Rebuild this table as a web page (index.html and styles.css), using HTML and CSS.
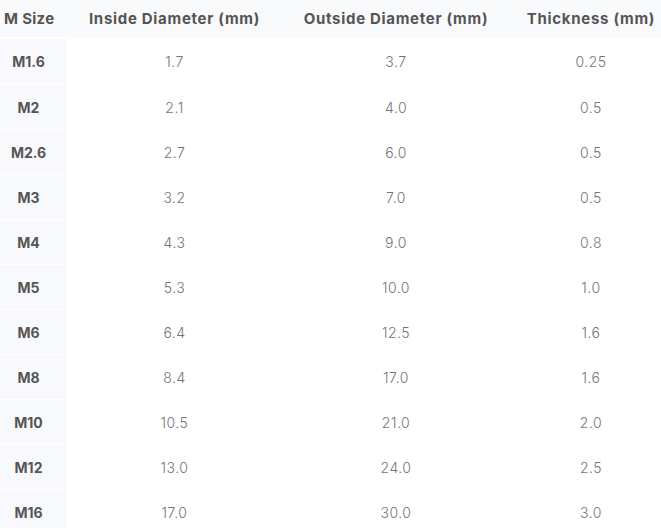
FILE: index.html
```html
<!DOCTYPE html>
<html>
<head>
<meta charset="utf-8">
<link rel="stylesheet" href="styles.css">
</head>
<body>
<table class="sizes">
  <colgroup>
    <col class="c1"><col class="c2"><col class="c3"><col class="c4">
  </colgroup>
  <thead>
    <tr><th class="first">M Size</th><th>Inside Diameter (mm)</th><th>Outside Diameter (mm)</th><th>Thickness (mm)</th></tr>
  </thead>
  <tbody>
    <tr><th class="first">M1.6</th><td>1.7</td><td>3.7</td><td>0.25</td></tr>
    <tr><th class="first">M2</th><td>2.1</td><td>4.0</td><td>0.5</td></tr>
    <tr><th class="first">M2.6</th><td>2.7</td><td>6.0</td><td>0.5</td></tr>
    <tr><th class="first">M3</th><td>3.2</td><td>7.0</td><td>0.5</td></tr>
    <tr><th class="first">M4</th><td>4.3</td><td>9.0</td><td>0.8</td></tr>
    <tr><th class="first">M5</th><td>5.3</td><td>10.0</td><td>1.0</td></tr>
    <tr><th class="first">M6</th><td>6.4</td><td>12.5</td><td>1.6</td></tr>
    <tr><th class="first">M8</th><td>8.4</td><td>17.0</td><td>1.6</td></tr>
    <tr><th class="first">M10</th><td>10.5</td><td>21.0</td><td>2.0</td></tr>
    <tr><th class="first">M12</th><td>13.0</td><td>24.0</td><td>2.5</td></tr>
    <tr><th class="first">M16</th><td>17.0</td><td>30.0</td><td>3.0</td></tr>
  </tbody>
</table>
</body>
</html>
```

FILE: styles.css
```css
html, body {
  margin: 0;
  padding: 0;
  background: #ffffff;
  overflow: hidden;
}
body {
  font-family: "Inter", "Liberation Sans", sans-serif;
}
.sizes {
  border-collapse: separate;
  border-spacing: 0;
  width: 672px;
  table-layout: fixed;
}
.c1 { width: 67px; }
.c2 { width: 215px; }
.c3 { width: 228px; }
.c4 { width: 162px; }
.sizes thead th {
  height: 37px;
  padding: 0;
  background: #f9fafb;
  border-bottom: 2px solid #ffffff;
  color: #555555;
  font-size: 15px;
  font-weight: 700;
  letter-spacing: 0.7px;
  text-align: center;
  vertical-align: middle;
}
.sizes thead th.first {
  text-align: left;
  padding-left: 4px;
  letter-spacing: 0.3px;
}
.sizes tbody th,
.sizes tbody td {
  height: 44px;
  padding: 0;
  border-top: 1px solid #ffffff;
  text-align: center;
  vertical-align: middle;
  font-size: 14px;
}
.sizes tbody tr:first-child th,
.sizes tbody tr:first-child td {
  border-top: 0;
  height: 45px;
}
.sizes tbody th.first {
  background: #f8f9fc;
  color: #555555;
  font-weight: 700;
  padding-right: 10px;
}
.sizes tbody td {
  color: #747474;
  font-weight: 300;
  letter-spacing: 0.5px;
}
```
